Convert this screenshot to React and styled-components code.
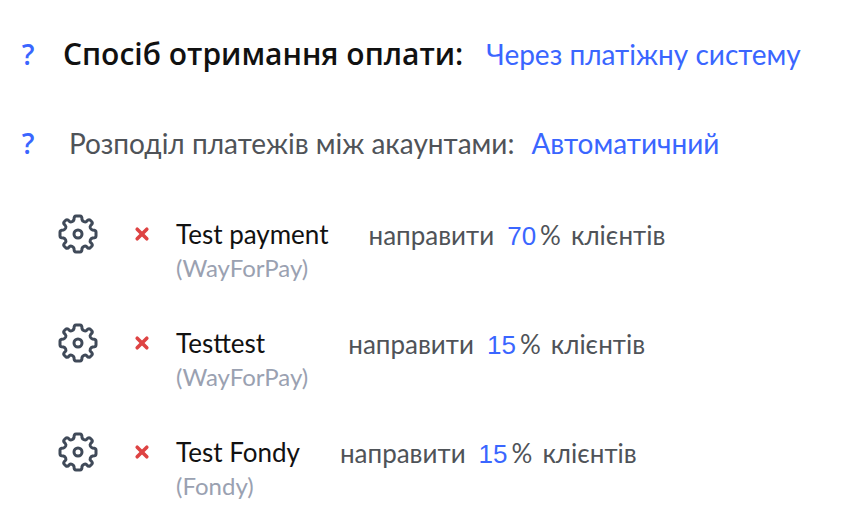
import React from "react";
import styled, { createGlobalStyle } from "styled-components";

const Global = createGlobalStyle`
  * { box-sizing: border-box; }
  body {
    margin: 0;
    background: #fff;
    color: #4f5358;
    font-family: Lato, "Open Sans", sans-serif;
    font-size: 26px;
    line-height: 34px;
  }
`;

const Page = styled.main`
  padding: 36px 21px 0;
`;

const Setting = styled.section`
  display: flex;
  align-items: center;
  margin-bottom: 53px;
`;

const PlainButton = styled.button`
  border: 0;
  padding: 0;
  background: none;
  font: inherit;
  cursor: pointer;
`;

const Help = styled(PlainButton)`
  width: 14px;
  margin-right: ${(p) => p.$gap}px;
  color: #3a66ff;
  font: 600 28px/36px "Open Sans", sans-serif;
`;

const Title = styled.h1`
  margin: 0 23px 0 0;
  color: #111;
  font: 600 30px/36px "Open Sans", sans-serif;
`;

const Label = styled.h2`
  margin: 0 17px 0 0;
  font-size: 28px;
  font-weight: 400;
`;

const Link = styled.a`
  color: #3a66ff;
  text-decoration: none;
`;

const Choice = styled(Link)`
  font-size: 28px;
`;

const List = styled.ul`
  display: grid;
  gap: 38px;
  list-style: none;
  margin: 0;
  padding: 0 0 0 37px;
`;

const Row = styled.li`
  display: flex;
  align-items: flex-start;
`;

const Gear = styled(PlainButton)`
  height: 40px;
  margin-right: 36px;

  svg { display: block; }
`;

const Remove = styled(PlainButton)`
  display: flex;
  align-items: center;
  height: 40px;
  margin-right: 26px;
`;

const Account = styled.div`
  margin-right: 40px;
  color: #111;
`;

const Name = styled.div`
  padding-top: 3px;
`;

const System = styled.div`
  color: #9aa1b1;
  font-size: 24px;
`;

const Share = styled.div`
  display: flex;
  align-items: baseline;
  padding-top: 4px;
  white-space: nowrap;
`;

const Percent = styled(Link)`
  margin: 0 4px 0 13px;
  font-family: "Liberation Sans", Arial, sans-serif;
`;

const Clients = styled.span`
  margin-left: 10px;
`;

const GearIcon = () => (
  <svg width="40" height="40" viewBox="0 0 40 40" fill="none" stroke="#404a59" strokeWidth="3" strokeLinejoin="round">
    <circle cx="20" cy="20" r="4" />
    <path d="M16 5.500Q16 2 18 2H22Q24 2 24 5.500Q24.400 7 26 7.700Q27.500 8.300 28.600 7.300Q30.500 5 32 6L34 8Q35 9.500 32.700 11.400Q31.700 12.500 32.300 14Q33 15.600 34.500 16Q38 16 38 18V22Q38 24 34.500 24Q33 24.400 32.300 26Q31.700 27.500 32.700 28.600Q35 30.500 34 32L32 34Q30.500 35 28.600 32.700Q27.500 31.700 26 32.300Q24.400 33 24 34.500Q24 38 22 38H18Q16 38 16 34.500Q15.600 33 14 32.300Q12.500 31.700 11.400 32.700Q9.500 35 8 34L6 32Q5 30.500 7.300 28.600Q8.300 27.500 7.700 26Q7 24.400 5.500 24Q2 24 2 22V18Q2 16 5.500 16Q7 15.600 7.700 14Q8.300 12.500 7.300 11.400Q5 9.500 6 8L8 6Q9.500 5 11.400 7.300Q12.500 8.300 14 7.700Q15.600 7 16 5.500Z" />
  </svg>
);

const CrossIcon = () => (
  <svg width="16" height="16" viewBox="0 0 16 16" stroke="#de4343" strokeWidth="3.600" strokeLinecap="round">
    <path d="M3.200 3.200L12.800 12.800M12.800 3.200L3.200 12.800" />
  </svg>
);

const accounts = [
  { name: "Test payment", system: "WayForPay", share: 70 },
  { name: "Testtest", system: "WayForPay", share: 15 },
  { name: "Test Fondy", system: "Fondy", share: 15 },
];

export default function App() {
  return (
    <Page>
      <Global />
      <Setting>
        <Help aria-label="Довідка: спосіб отримання оплати" $gap={28}>?</Help>
        <Title>Спосіб отримання оплати:</Title>
        <Choice href="#method">Через платіжну систему</Choice>
      </Setting>
      <Setting>
        <Help aria-label="Довідка: розподіл платежів" $gap={34}>?</Help>
        <Label>Розподіл платежів між акаунтами:</Label>
        <Choice href="#distribution">Автоматичний</Choice>
      </Setting>
      <List>
        {accounts.map(({ name, system, share }) => (
          <Row key={name}>
            <Gear aria-label={`Налаштувати ${name}`}><GearIcon /></Gear>
            <Remove aria-label={`Видалити ${name}`}><CrossIcon /></Remove>
            <Account>
              <Name>{name}</Name>
              <System>({system})</System>
            </Account>
            <Share>
              направити
              <Percent href="#share">{share}</Percent>
              %
              <Clients>клієнтів</Clients>
            </Share>
          </Row>
        ))}
      </List>
    </Page>
  );
}
